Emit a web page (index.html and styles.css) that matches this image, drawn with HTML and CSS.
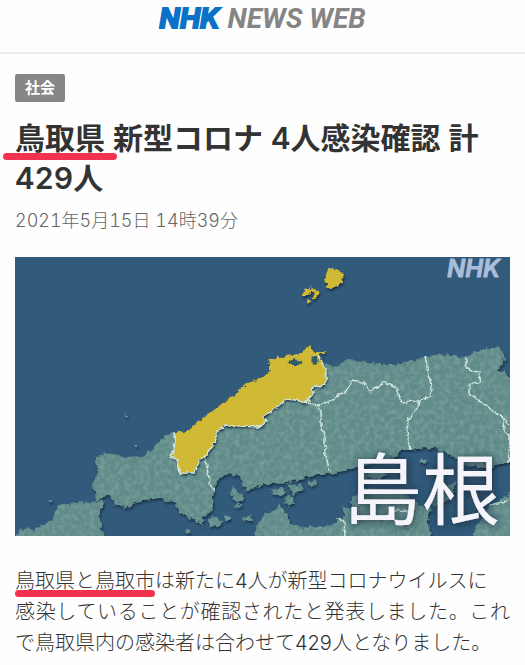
FILE: index.html
```html
<!DOCTYPE html>
<html lang="ja">
<head>
<meta charset="utf-8">
<meta name="viewport" content="width=device-width, initial-scale=1">
<title>鳥取県 新型コロナ 4人感染確認 計429人</title>
<link rel="stylesheet" href="styles.css">
</head>
<body>
<header class="site-header">
  <span class="brand">NHK</span>
  <span class="service">NEWS WEB</span>
</header>
<main class="article">
  <span class="category">社会</span>
  <h1 class="title"><span class="marked marked-wide">鳥取県</span> 新型コロナ 4人感染確認 計429人</h1>
  <time class="date" datetime="2021-05-15T14:39">2021年5月15日 14時39分</time>
  <svg class="map" viewBox="15 257 495 279" role="img" aria-label="島根県の地図">
    <defs>
      <clipPath id="frame"><rect x="15" y="257" width="495" height="279"/></clipPath>
      <filter id="rough" x="-5%" y="-5%" width="110%" height="110%">
        <feTurbulence type="fractalNoise" baseFrequency="0.22" numOctaves="3" seed="4" result="n"/>
        <feDisplacementMap in="SourceGraphic" in2="n" scale="7" xChannelSelector="R" yChannelSelector="G" result="d"/>
        <feDropShadow in="d" dx="1" dy="2" stdDeviation="1" flood-color="#132f43" flood-opacity=".9"/>
      </filter>
      <filter id="line" x="-5%" y="-5%" width="110%" height="110%">
        <feTurbulence type="fractalNoise" baseFrequency="0.22" numOctaves="3" seed="4" result="n"/>
        <feDisplacementMap in="SourceGraphic" in2="n" scale="5" xChannelSelector="R" yChannelSelector="G"/>
      </filter>
      <filter id="relief" x="0" y="0" width="100%" height="100%">
        <feTurbulence type="fractalNoise" baseFrequency="0.2" numOctaves="4" seed="9"/>
        <feColorMatrix values="0 0 0 0 .68  0 0 0 0 .82  0 0 0 0 .8  1.8 0 0 0 -.7" result="t"/>
        <feComposite in="t" in2="SourceGraphic" operator="in"/>
      </filter>
      <filter id="glow" x="-10%" y="-10%" width="120%" height="130%">
        <feDropShadow dx="1" dy="1" stdDeviation="4" flood-color="#15293a" flood-opacity="1"/>
      </filter>
      <g id="land">
        <path d="M96 502 95 492 93 483 98 472 95 460 99 457 105 453 118 455 130 458 145 456 155 446 168 434 175 432 200 430 300 375 319 354 324 362 333 367 338 365 348 359 360 362 380 364 400 364 415 360 425 357 440 354 455 356 465 358 475 352 485 349 500 347 505 357 502 366 496 370 505 372 509 378 516 382V462L500 464 488 468 470 466 462 463 450 455 437 449 425 448 410 450 400 450 393 458 375 462 355 468 340 472 330 474 318 474 305 478 290 482 270 484 258 486 246 492 240 476 228 474 217 480 214 490 212 505 213 510 202 518 203 526 195 520 180 513 175 502 160 498 145 500 125 508 115 504 108 494Z"/>
        <path d="M10 540 18 532 27 528 33 530 45 525 52 518 58 506 68 504 80 501 88 504 97 502 104 500 99 517 105 540Z"/>
        <path d="M254 540 257 525 264 515 275 511 280 505 286 514 290 524 305 527 320 527 335 524 345 517 342 505 352 510 352 497 365 490 385 489 405 494 421 507 431 508 427 520 432 540Z"/>
        <path d="M458 480 449 499 434 508 429 499 443 487Z"/>
        <path d="M516 490 500 500 490 505 483 520 475 526 474 540H516Z"/>
        <path d="M208 520 215 516 223 521 219 527 210 526ZM232 486 239 491 243 499 237 503 231 496ZM271 489 281 488 287 493 280 497 273 494ZM288 484 299 484 304 490 293 495ZM284 497 293 496 295 503 287 506ZM242 518 251 516 252 520 244 522ZM225 516 231 517 230 520 225 520ZM419 459 426 459 427 463 420 462ZM125 413 128 415 127 418 125 417ZM48 500 51 500 51 502 48 502ZM134 445 137 445 137 447 134 447ZM308 481 317 482 315 487 308 485ZM186 528 191 530 189 533 185 531ZM235 505 243 504 241 508 236 508ZM360 473 377 470 389 473 379 479 365 478Z"/>
      </g>
    </defs>
    <g clip-path="url(#frame)">
      <rect x="15" y="257" width="495" height="279" fill="#325a7b"/>
      <g filter="url(#rough)"><use href="#land" fill="#608b89"/></g>
      <g class="relief" filter="url(#relief)"><use href="#land"/></g>
      <g filter="url(#rough)" fill="#d0b935">
        <path d="M174 432 186 432 196 424 206 415 222 403 236 394 248 383 262 378 270 372 270 364 266 361 280 357 298 354 304 351 309 347 314 352 328 352 320 354 318 357 322 363 326 370 326 384 312 388 313 393 307 403 295 400 286 399 276 408 262 417 266 422 258 427 240 426 226 425 217 431 214 443 206 455 200 460 194 473 180 473 177 460 171 457 175 445Z"/>
        <path d="M333 268 340 271 343 278 340 285 334 288 327 286 324 279 327 271Z"/>
        <path d="M307 289 313 287 319 292 317 298 312 299 315 294 311 292 307 296 303 296 303 292ZM306 299 311 300 311 304 307 302Z"/>
      </g>
      <g filter="url(#line)">
        <path d="M288 361 294 359 303 361 301 365 290 365ZM312 357 317 357 318 363 313 365Z" fill="#315b69"/>
        <g class="borders">
          <path d="M174 432 175 445 171 457 177 460 180 473 194 473 200 460 206 455 214 443 217 431 226 425 240 426 258 427 266 422 262 417 276 408 286 399 295 400 307 403 313 393 312 388 326 384 326 370 322 363 318 356"/>
          <path d="M205 456 208 473 211 486 215 491M307 403 318 405 321 411 321 426 325 437 325 453 330 472"/>
          <path d="M319 405 331 401 340 394 348 390 351 380 362 382 371 391 385 382 397 388 401 402 417 401 429 397 432 390 429 375 425 357"/>
          <path d="M419 401 417 408 408 420 407 432 410 450M466 358 466 367 473 371 480 372 479 383 469 385 469 394 482 402 493 411 501 416 509 425M503 420 504 430 510 437 509 463M345 536 344 521 336 519M386 516 397 510 410 511M490 505 510 500"/>
        </g>
      </g>
    </g>
    <text class="watermark" x="447" y="277">NHK</text>
    <text class="place" x="344" y="519" filter="url(#glow)">島根</text>
  </svg>
  <p class="body"><span class="marked">鳥取県と鳥取市</span>は新たに4人が新型コロナウイルスに<br>感染していることが確認されたと発表しました。これで鳥取県内の感染者は合わせて429人となりました。</p>
</main>
</body>
</html>
```
FILE: styles.css
```css
* {
  box-sizing: border-box;
}

body {
  margin: 0;
  background: #fefefe;
  color: #333;
  font-family: Inter, "Noto Sans CJK JP", sans-serif;
}

.site-header {
  display: flex;
  justify-content: center;
  align-items: baseline;
  gap: 8px;
  padding: 3px 0 17px;
  border-bottom: 2px solid #ececec;
  line-height: 32px;
  font-style: italic;
}

.brand {
  color: #0b72c8;
  font-size: 27px;
  font-weight: 700;
  -webkit-text-stroke: 2px #0b72c8;
}

.service {
  color: #858585;
  font-family: Roboto, "Liberation Sans", sans-serif;
  font-size: 28px;
  font-weight: 700;
}

.article {
  display: flex;
  flex-direction: column;
  align-items: flex-start;
  padding: 20px 15px 8px;
}

.category {
  padding: 0 10px;
  border-radius: 2px;
  background: #878787;
  color: #fff;
  font-size: 15px;
  font-weight: 700;
  line-height: 28px;
}

.title {
  margin: 16px 0 11px;
  font-size: 30px;
  font-weight: 600;
  line-height: 40px;
  font-variant-numeric: tabular-nums;
}

.date {
  color: #666;
  font-size: 18px;
  font-weight: 300;
  line-height: 24px;
  font-variant-numeric: tabular-nums;
}

.map {
  display: block;
  width: 100%;
  height: auto;
  margin-top: 24px;
  overflow: visible;
}

.relief {
  opacity: .25;
}

.borders {
  fill: none;
  stroke: #cfe5df;
  stroke-width: 1.5;
  stroke-linejoin: round;
}

.watermark {
  fill: #a9bddb;
  stroke: #a9bddb;
  stroke-width: 1;
  stroke-linejoin: round;
  font-size: 24px;
  font-weight: 600;
  font-style: italic;
}

.place {
  fill: #f4f4fa;
  font-family: "Noto Sans CJK JP", sans-serif;
  font-size: 78px;
  font-weight: 400;
}

.body {
  width: 100%;
  margin: 30px 0 0;
  font-size: 20px;
  font-weight: 300;
  line-height: 31px;
  text-align: justify;
}

.marked {
  position: relative;
}

.marked::after {
  content: "";
  position: absolute;
  right: 0;
  bottom: -4px;
  left: 0;
  height: 7px;
  border-radius: 4px;
  background: #f23350;
}

.marked-wide::after {
  right: -12px;
  left: -12px;
}
```
